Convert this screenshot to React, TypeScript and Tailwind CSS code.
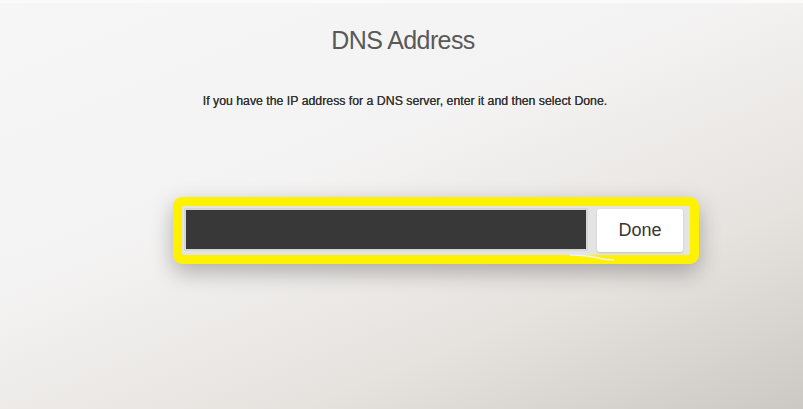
export default function App() {
  return (
    <div className="relative flex h-[409px] w-[803px] flex-col overflow-hidden bg-[linear-gradient(158deg,#f6f6f7_0%,#f4f3f3_40%,#e6e2de_72%,#ccc8c4_100%)] font-['Liberation_Sans',Arial,sans-serif]">
      <div className="h-[3px] w-full bg-[#fafafa]" />
      <h1 className="mt-[22px] self-center pl-[3px] text-[25px] leading-[30px] tracking-[-0.6px] text-[#595959]">
        DNS Address
      </h1>
      <p className="mt-[39px] self-center pl-[7px] text-[12.3px] leading-[14px] text-[#333333] [text-shadow:0_0_0.4px_#333]">
        If you have the IP address for a DNS server, enter it and then select Done.
      </p>
      <div className="relative ml-[173px] mt-[89px] w-[526px] rounded-[9px] bg-[#fff200] p-[9px] shadow-[0_8px_22px_rgba(0,0,0,0.28)]">
        <div className="flex h-[49px] items-start gap-[9px] rounded-[2px] bg-[#e4e4e4] pl-[2px] pr-[7px] pt-[2px]">
          <div className="h-[43px] w-[404px] border-[2px] border-[#d6d6d6] bg-[#383838]" />
          <button className="mt-[1px] flex h-[43px] w-[86px] items-center justify-center rounded-[3px] bg-white text-[18px] text-[#363636] shadow-[0_1px_2px_rgba(0,0,0,0.15)]">
            Done
          </button>
        </div>
        <svg className="absolute left-[395px] top-[55px]" width="50" height="12" viewBox="0 0 50 12">
          <path d="M2 3 C 14 3, 22 4, 30 6 S 42 8, 46 8" stroke="#f2f2f2" strokeWidth="1.5" fill="none" />
        </svg>
      </div>
    </div>
  );
}
